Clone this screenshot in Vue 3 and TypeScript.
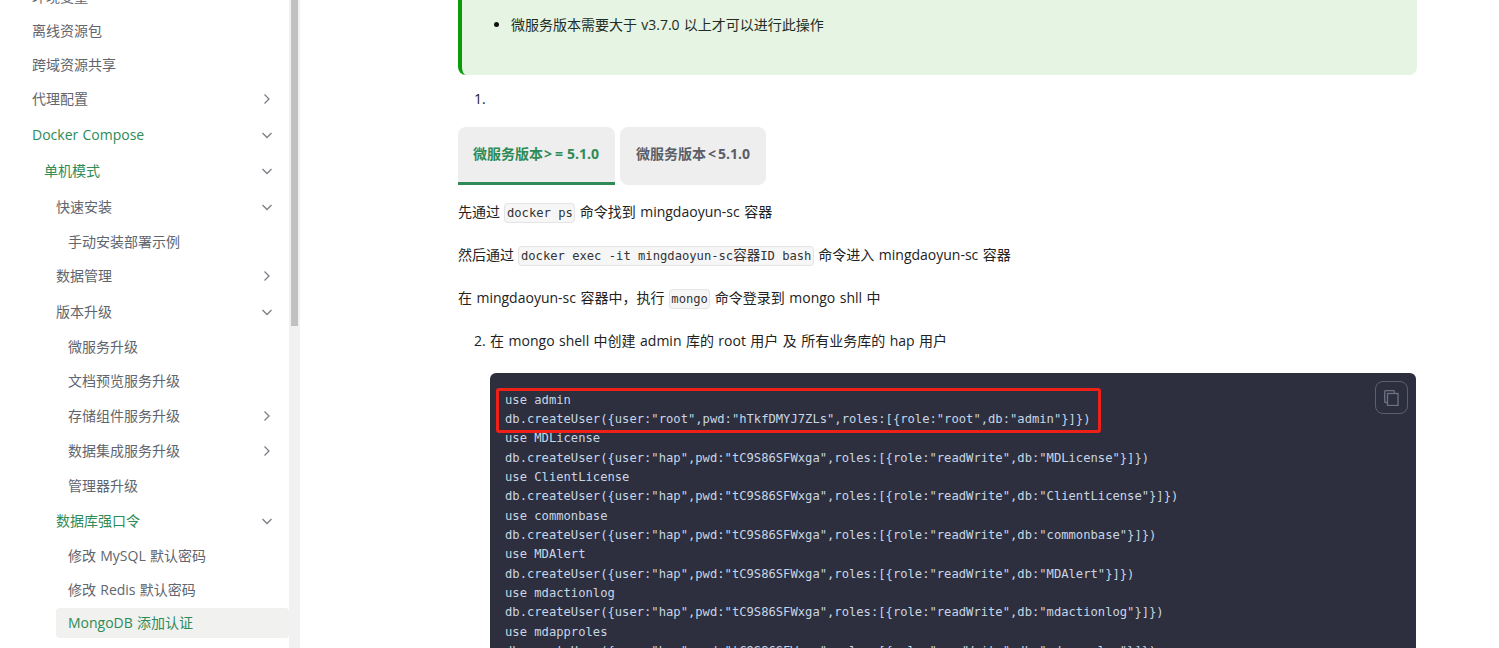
<script setup lang="ts">
interface NavItem { label: string; level: number; arrow?: 'right' | 'down'; active?: boolean; current?: boolean }
const nav: NavItem[] = [
  { label: '环境变量', level: 0 },
  { label: '离线资源包', level: 0 },
  { label: '跨域资源共享', level: 0 },
  { label: '代理配置', level: 0, arrow: 'right' },
  { label: 'Docker Compose', level: 0, arrow: 'down', active: true },
  { label: '单机模式', level: 1, arrow: 'down', active: true },
  { label: '快速安装', level: 2, arrow: 'down' },
  { label: '手动安装部署示例', level: 3 },
  { label: '数据管理', level: 2, arrow: 'right' },
  { label: '版本升级', level: 2, arrow: 'down' },
  { label: '微服务升级', level: 3 },
  { label: '文档预览服务升级', level: 3 },
  { label: '存储组件服务升级', level: 3, arrow: 'right' },
  { label: '数据集成服务升级', level: 3, arrow: 'right' },
  { label: '管理器升级', level: 3 },
  { label: '数据库强口令', level: 2, arrow: 'down', active: true },
  { label: '修改 MySQL 默认密码', level: 3 },
  { label: '修改 Redis 默认密码', level: 3 },
  { label: 'MongoDB 添加认证', level: 3, active: true, current: true },
]
const pw = 'tC9S86SFWxga'
const dbs = ['MDLicense', 'ClientLicense', 'commonbase', 'MDAlert', 'mdactionlog', 'mdapproles']
const lines: string[] = ['use admin', 'db.createUser({user:"root",pwd:"hTkfDMYJ7ZLs",roles:[{role:"root",db:"admin"}]})']
for (const d of dbs) {
  lines.push(`use ${d}`)
  lines.push(`db.createUser({user:"hap",pwd:"${pw}",roles:[{role:"readWrite",db:"${d}"}]})`)
}
</script>

<template>
  <div class="page">
    <aside class="sidebar">
      <nav class="nav">
        <div
          v-for="item in nav"
          :key="item.label"
          class="row"
          :class="[`lv${item.level}`, { branch: item.arrow }]"
        >
          <div class="link" :class="{ active: item.active, current: item.current }">
            <span>{{ item.label }}</span>
            <svg v-if="item.arrow" class="caret" viewBox="0 0 12 12" width="12" height="12" fill="none">
              <path v-if="item.arrow === 'right'" d="M3.5 1.5 L8 6 L3.5 10.5" />
              <path v-else d="M1.5 4 L6 8.5 L10.5 4" />
            </svg>
          </div>
        </div>
      </nav>
      <div class="track"><div class="thumb"></div></div>
    </aside>

    <main class="main">
      <div class="alert">
        <ul><li>微服务版本需要大于 v3.7.0 以上才可以进行此操作</li></ul>
      </div>

      <div class="num first">1.</div>

      <div class="tabs">
        <div class="tab on">微服务版本<span class="op wide">&gt;=</span>5.1.0</div>
        <div class="tab">微服务版本<span class="op">&lt;</span>5.1.0</div>
      </div>

      <p>先通过 <code>docker ps</code> 命令找到 mingdaoyun-sc 容器</p>
      <p>然后通过 <code>docker exec -it mingdaoyun-sc<span class="cjk">容器</span>ID bash</code> 命令进入 mingdaoyun-sc 容器</p>
      <p>在 mingdaoyun-sc 容器中，执行 <code>mongo</code> 命令登录到 mongo shll 中</p>

      <div class="num second">2. 在 mongo shell 中创建 admin 库的 root 用户 及 所有业务库的 hap 用户</div>

      <div class="code">
        <div class="copy">
          <svg viewBox="0 0 16 16" width="16" height="16" fill="none">
            <path d="M3 12.5 H1.5 A0.8 0.8 0 0 1 0.7 11.7 V1.5 A0.8 0.8 0 0 1 1.5 0.7 H9.5 A0.8 0.8 0 0 1 10.3 1.5 V3" />
            <rect x="3.5" y="3.5" width="10.5" height="12" />
          </svg>
        </div>
        <div class="redbox"></div>
        <div v-for="(l, i) in lines" :key="i" class="line">{{ l }}</div>
      </div>
    </main>
  </div>
</template>

<style>
html, body { margin: 0; background: #fff; overflow: hidden; }
</style>

<style scoped>
.page {
  display: flex;
  height: 648px;
  overflow: hidden;
  background: #fff;
  font-family: "Open Sans", "Noto Sans CJK SC", sans-serif;
  font-size: 14px;
  word-spacing: 0.6px;
  color: #222;
}
.sidebar { width: 300px; flex: none; display: flex; height: 648px; overflow: hidden; }
.nav { flex: 1; margin-top: -19.8px; min-width: 0; }
.track { width: 11px; flex: none; background: #f1f1f1; padding-left: 2px; box-sizing: border-box; }
.thumb { width: 7px; height: 326px; background: #c1c1c1; }

.row { height: 33.8px; display: flex; align-items: center; }
.row.branch { height: 35.8px; }
.lv0 { padding-left: 20px; }
.lv1 { padding-left: 32px; }
.lv2 { padding-left: 44px; }
.lv3 { padding-left: 56px; }
.link {
  flex: 1;
  height: 30px;
  padding-left: 12px;
  padding-right: 16px;
  display: flex;
  align-items: center;
  justify-content: space-between;
  color: #60656e;
  border-radius: 4px;
  line-height: 30px;
  white-space: nowrap;
}
.link.active { color: #2e8b57; }
.link.current { background: #f1f1f0; }
.caret { stroke: #7b7f86; stroke-width: 1.3; }

.main { flex: 1; padding-left: 158px; padding-right: 82px; min-width: 0; }
.alert {
  margin-top: -20px;
  height: 95px;
  box-sizing: border-box;
  background: #e5f4e3;
  border-left: 4px solid #0a9a0a;
  border-radius: 8px;
  padding-top: 35px;
  color: #1f2d24;
}
.alert ul { margin: 0; padding-left: 49px; }
.alert li { line-height: 20px; }
.alert li::marker { color: #111; }

.num { line-height: 20px; }
.first { margin-top: 14px; padding-left: 16px; }
.second { margin-top: 23px; padding-left: 16px; word-spacing: 0.8px; }

.tabs { display: flex; gap: 5px; margin-top: 18px; height: 58px; }
.tab {
  box-sizing: border-box;
  padding: 0 16px;
  background: #eee;
  border-radius: 8px;
  font-weight: 700;
  color: #5a5e68;
  line-height: 54px;
  white-space: nowrap;
}
.tab.on {
  padding: 0 16px 0 15px;
  color: #2e8b57;
  border-radius: 8px 8px 0 0;
  border-bottom: 3px solid #2e8b57;
}
.op { padding: 0 2px; }
.op.wide { letter-spacing: 3px; padding: 0 1px; }

p { margin: 0; line-height: 20px; height: 20px; white-space: nowrap; word-spacing: 0.8px; }
.tabs + p { margin-top: 17px; }
p + p { margin-top: 23px; }

code {
  font-family: "DejaVu Sans Mono", "Noto Sans CJK SC", monospace;
  font-size: 12.16px;
  word-spacing: 0;
  padding: 2px 1.5px;
  background: #f6f6f7;
  border: 1px solid #e4e4e6;
  border-radius: 4px;
  color: #333;
}
.cjk { font-size: 13.5px; }

.code {
  position: relative;
  margin: 22px 1px 0 32px;
  padding: 17.5px 15px;
  background: #2d2f3f;
  border-radius: 6px;
  font-family: "DejaVu Sans Mono", monospace;
  font-size: 12.16px;
  word-spacing: 0;
  color: #c8d6e5;
}
.line { height: 19.35px; line-height: 19.35px; white-space: pre; }
.redbox {
  position: absolute;
  left: 6px;
  top: 15px;
  width: 599px;
  height: 39px;
  border: 3px solid #ee2018;
  border-radius: 3px;
}
.copy {
  position: absolute;
  top: 8px;
  right: 8px;
  width: 33px;
  height: 33px;
  box-sizing: border-box;
  border: 1px solid #5c5f70;
  border-radius: 8px;
  display: flex;
  align-items: center;
  justify-content: center;
}
.copy svg { stroke: #6e7182; stroke-width: 1.3; }
</style>
